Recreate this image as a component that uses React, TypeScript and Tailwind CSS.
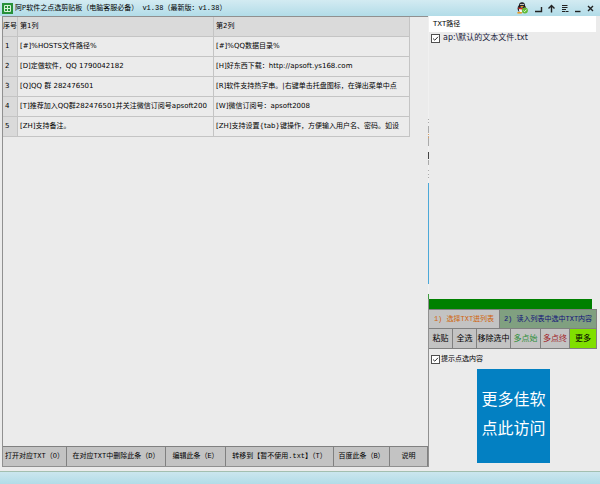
import type { ReactNode } from 'react';
import clsx from 'clsx';

const rows = [
  ['[#]%HOSTS文件路径%', '[#]%QQ数据目录%'],
  ['[D]定做软件，QQ 1790042182', '[H]好东西下载：http://apsoft.ys168.com'],
  [
    '[Q]QQ 群 282476501',
    '[R]软件支持热字串。|右键单击托盘图标，在弹出菜单中点',
  ],
  [
    '[T]推荐加入QQ群282476501并关注微信订阅号apsoft200',
    '[W]微信订阅号：apsoft2008',
  ],
  ['[ZH]支持备注。', '[ZH]支持设置{tab}键操作，方便输入用户名、密码。如设'],
];

const actions = [
  { label: '打开对应TXT（O）', width: 'w-16' },
  { label: '在对应TXT中删除此条（D）', width: 'w-[99px]' },
  { label: '编辑此条（E）', width: 'w-15' },
  { label: '转移到【暂不使用.txt】（T）', width: 'w-[108px]' },
  { label: '百度此条（B）', width: 'w-14' },
  { label: '说明', width: 'flex-1' },
];

const tools = [
  { label: '粘贴', className: 'w-6' },
  { label: '全选', className: 'w-6' },
  { label: '移除选中', className: 'w-[34px]' },
  { label: '多点始', className: 'w-[30px] text-[#2f8f3a]' },
  { label: '多点终', className: 'w-[29px] text-[#a01c28]' },
  { label: '更多', className: 'flex-1 bg-[#80e000]' },
];

const MONO = "font-['Liberation_Mono','Noto_Sans_CJK_SC',monospace]";
const SANS = "font-['DejaVu_Sans','Noto_Sans_CJK_SC',sans-serif]";

function BarButton({
  className,
  children,
}: {
  className?: string;
  children: ReactNode;
}) {
  return (
    <button
      type="button"
      className={clsx(
        'shrink-0 border-r border-[#808080] text-center whitespace-nowrap overflow-hidden',
        className
      )}
    >
      {children}
    </button>
  );
}

function CheckRow({
  id,
  label,
  className,
}: {
  id: string;
  label: string;
  className?: string;
}) {
  return (
    <div className={clsx('flex items-center pl-[2px]', className)}>
      <span className="relative size-[9px] shrink-0">
        <input
          id={id}
          type="checkbox"
          defaultChecked
          className="peer block size-[9px] appearance-none border border-[#505050] bg-white"
        />
        <svg
          viewBox="0 0 9 9"
          className="pointer-events-none absolute inset-0 hidden size-[9px] peer-checked:block"
        >
          <path d="M2 4.5 3.8 6.2 7 2.8" fill="none" stroke="#333" />
        </svg>
      </span>
      <label htmlFor={id}>{label}</label>
    </div>
  );
}

function PenguinIcon() {
  return (
    <svg viewBox="0 0 11 12" className="mr-[3px] h-3 w-[11px]">
      <ellipse cx="4.8" cy="6.6" rx="4.2" ry="4" fill="#26262c" />
      <ellipse cx="5" cy="3.2" rx="2.9" ry="3" fill="#17171c" />
      <ellipse cx="4.6" cy="8" rx="2.6" ry="2.6" fill="#f4f4f4" />
      <circle cx="4" cy="2.5" r=".8" fill="#fff" />
      <circle cx="6" cy="2.5" r=".8" fill="#fff" />
      <path d="M2.8 3.9h4.4L5 5.3z" fill="#f5a623" />
      <path d="M1.4 5.2q3.6 1.8 7.2 0v1.6q-3.6 1.6-7.2 0z" fill="#d92c20" />
      <path d="M.4 10h4.4v1.6H.4z" fill="#e89a22" />
      <circle cx="7.9" cy="8.6" r="3" fill="#62bb38" />
      <path d="m6.5 8.6 1.1 1.1 1.9-2.1" fill="none" stroke="#e4f7dc" />
    </svg>
  );
}

const windowIcons = [
  { name: '贴边', path: 'M1 7.5h6.5V3' },
  { name: '置顶', path: 'M4.5 8.5V2M1.5 4.5l3-3 3 3' },
  { name: '菜单', path: 'M2 1.5h5.5M2 3.5h5.5M2 5.5h4M2 7.5h3M5.5 7.5h3' },
  { name: '最小化', path: 'M2 7.5h5.5' },
  { name: '关闭', path: 'M2 2l5 5M7 2 2 7' },
];

function TitleBar() {
  return (
    <header className="flex h-4 shrink-0 items-center bg-linear-to-b from-[#d3ebf2] to-[#b2dce8] pr-1 pl-[2px]">
      <svg viewBox="0 0 11 11" className="size-[11px]">
        <path d="M0 0h11v11H0z" fill="#279139" />
        <path
          d="M2.5 2.5h6v6h-6zM5.5 2v7M2 5.5h7"
          fill="none"
          stroke="#d8f3d8"
        />
      </svg>
      <h1 className={clsx('ml-[2px] text-[7px] whitespace-pre', MONO)}>
        阿P软件之点选剪贴板（电脑客服必备） v1.38（最新版：v1.38）
      </h1>
      <div className="ml-auto flex items-center gap-[2px]">
        <PenguinIcon />
        {windowIcons.map(({ name, path }) => (
          <button key={name} type="button" aria-label={name} className="px-px">
            <svg viewBox="0 0 9 9" className="size-[9px]">
              <path
                d={path}
                fill="none"
                stroke="#222"
                strokeWidth={name === '菜单' ? 1 : 1.4}
              />
            </svg>
          </button>
        ))}
      </div>
    </header>
  );
}

function ClipTable() {
  const cell = 'h-5 border-r border-b border-[#c4c4c4] p-0 overflow-hidden';
  return (
    <table
      className={clsx(
        'w-[407px] table-fixed border-separate border-spacing-0 text-left text-[7px] whitespace-nowrap',
        SANS
      )}
    >
      <colgroup>
        <col className="w-[15px]" />
        <col className="w-49" />
        <col className="w-49" />
      </colgroup>
      <thead className="bg-[#dadada]">
        <tr>
          <th className={clsx(cell, 'font-normal')}>序号</th>
          <th className={clsx(cell, 'pl-[2px] font-normal')}>第1列</th>
          <th className={clsx(cell, 'pl-[2px] font-normal')}>第2列</th>
        </tr>
      </thead>
      <tbody>
        {rows.map(([first, second], i) => (
          <tr key={first}>
            <th className={clsx(cell, 'bg-[#dadada] pl-[2px] font-normal')}>
              {i + 1}
            </th>
            <td className={clsx(cell, 'pl-[2px]')}>{first}</td>
            <td className={clsx(cell, 'pl-[2px]')}>{second}</td>
          </tr>
        ))}
      </tbody>
    </table>
  );
}

// sliver of the desktop showing between the two panes
function PaneGap() {
  return (
    <svg
      width="1"
      height="283"
      className="absolute top-0 -left-px"
      shapeRendering="crispEdges"
    >
      <path d="M.5 0v283" stroke="#f0f0f0" />
      <path
        d="M.5 103v1M.5 106v1M.5 110v7M.5 120v10M.5 144v5M.5 154v1M.5 158v1M.5 161v1"
        stroke="#aaa"
      />
      <path d="M.5 118v1M.5 121v1" stroke="#e0a060" />
      <path d="M.5 136v7" stroke="#444" />
      <path d="M.5 167v101" stroke="#4ba8d8" />
      <path d="M.5 278v5" stroke="#3f9f3f" />
    </svg>
  );
}

function SidePane() {
  return (
    <aside className="relative flex w-[171px] shrink-0 flex-col">
      <PaneGap />
      <div className={clsx('flex-1', SANS)}>
        <h2 className="mr-1 flex h-4 items-center bg-white pt-px pl-1 text-[7px]">
          TXT路径
        </h2>
        <CheckRow
          id="file"
          label="ap:\默认的文本文件.txt"
          className="h-3 gap-[3px] text-[8px] text-[#20203a]"
        />
      </div>

      <div className="mr-2 h-[10px] bg-[#008000]" />
      <div className={clsx('mr-[3px] flex h-5 text-[7px]', MONO)}>
        <BarButton className="w-[71px] border-y bg-[#c3c3c3] text-[#d0640c]">
          1) 选择TXT进列表
        </BarButton>
        <BarButton className="flex-1 border-y bg-[#80a080] text-[#10107a]">
          2) 读入列表中选中TXT内容
        </BarButton>
      </div>
      <div
        className={clsx(
          'mr-[3px] flex h-5 border-b border-[#808080] bg-[#c3c3c3] text-[8px]',
          SANS
        )}
      >
        {tools.map(({ label, className }) => (
          <BarButton key={label} className={className}>
            {label}
          </BarButton>
        ))}
      </div>

      <div className={clsx('h-[122px]', SANS)}>
        <CheckRow
          id="tip"
          label="提示点选内容"
          className="h-5 gap-px text-[7px]"
        />
        <a
          href="#more"
          className="mr-[50px] ml-12 flex h-[94px] flex-col items-center justify-center bg-[#0380c2] pb-1.5 font-['Noto_Sans_CJK_SC',sans-serif] text-[16px] leading-[29px] text-white"
        >
          <span>更多佳软</span>
          <span>点此访问</span>
        </a>
      </div>
    </aside>
  );
}

export default function App() {
  return (
    <div className="flex h-screen flex-col overflow-hidden bg-[#ebebeb] text-black">
      <TitleBar />
      <main className="flex min-h-0 flex-1">
        <section className="mb-1 ml-[2px] flex min-w-0 flex-1 flex-col border border-[#909090]">
          <div className="flex-1 overflow-hidden">
            <ClipTable />
          </div>
          <div
            className={clsx(
              'flex h-5 border-t border-[#808080] bg-[#c3c3c3] text-[7px]',
              MONO
            )}
          >
            {actions.map(({ label, width }) => (
              <BarButton key={label} className={width}>
                {label}
              </BarButton>
            ))}
          </div>
        </section>
        <SidePane />
      </main>
      <footer className="h-[13px] shrink-0 border-t border-[#a3bfb0] bg-linear-to-b from-[#cbe6ee] to-[#b2dce8]" />
    </div>
  );
}
